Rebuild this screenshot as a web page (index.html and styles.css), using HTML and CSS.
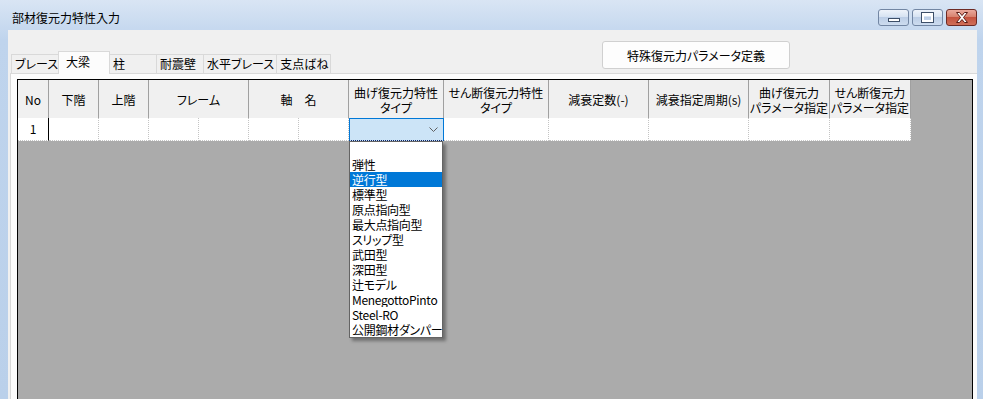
FILE: index.html
```html
<!DOCTYPE html>
<html>
<head>
  <meta charset="UTF-8">
  <title>部材復元力特性入力</title>
  <link rel="stylesheet" href="styles.css">
</head>
<body>
  <div class="window">
    <!-- タイトルバー -->
    <div class="titlebar">
      <span class="title">部材復元力特性入力</span>
      <div class="wbtns">
        <span class="wbtn min"><i></i></span>
        <span class="wbtn max"><i></i></span>
        <span class="wbtn close">
          <svg width="14" height="11" viewBox="0 0 14 11">
            <path d="M1.5 0.5h3l2.5 3 2.5-3h3l-4 5 4 5h-3l-2.5-3-2.5 3h-3l4-5z" fill="#fff" stroke="#5b1c16" stroke-width="1"/>
          </svg>
        </span>
      </div>
    </div>

    <div class="client">
      <!-- タブと特殊パラメータボタン -->
      <div class="toparea">
        <div class="tabs">
          <div class="tab">ブレース</div>
          <div class="tab active">大梁</div>
          <div class="tab">柱</div>
          <div class="tab">耐震壁</div>
          <div class="tab">水平ブレース</div>
          <div class="tab">支点ばね</div>
        </div>
        <button class="special-btn">特殊復元力パラメータ定義</button>
      </div>

      <div class="panel">
        <div class="grid">
          <div class="grid-head">
            <div class="hc c-no">No</div>
            <div class="hc c-50">下階</div>
            <div class="hc c-50">上階</div>
            <div class="hc c-100">フレーム</div>
            <div class="hc c-100">軸　名</div>
            <div class="hc c-bend">曲げ復元力特性<br>タイプ</div>
            <div class="hc c-shear">せん断復元力特性<br>タイプ</div>
            <div class="hc c-100">減衰定数(-)</div>
            <div class="hc c-100">減衰指定周期(s)</div>
            <div class="hc c-param">曲げ復元力<br>パラメータ指定</div>
            <div class="hc c-param">せん断復元力<br>パラメータ指定</div>
          </div>
          <div class="grid-row">
            <div class="dc c-no">1</div>
            <div class="dc c-50"></div>
            <div class="dc c-50"></div>
            <div class="dc c-50"></div>
            <div class="dc c-50"></div>
            <div class="dc c-50"></div>
            <div class="dc c-50"></div>
            <div class="dc c-bend combo">
              <svg class="chevron" width="9" height="5" viewBox="0 0 9 5">
                <polyline points="0.5,0.5 4.5,4.5 8.5,0.5" fill="none" stroke="#606060" stroke-width="1"/>
              </svg>
              <ul class="dropdown">
                <li>&nbsp;</li>
                <li>弾性</li>
                <li class="selected">逆行型</li>
                <li>標準型</li>
                <li>原点指向型</li>
                <li>最大点指向型</li>
                <li>スリップ型</li>
                <li>武田型</li>
                <li>深田型</li>
                <li>辻モデル</li>
                <li>MenegottoPinto</li>
                <li>Steel-RO</li>
                <li>公開鋼材ダンパー</li>
              </ul>
            </div>
            <div class="dc c-shear"></div>
            <div class="dc c-100"></div>
            <div class="dc c-100"></div>
            <div class="dc c-param"></div>
            <div class="dc c-param"></div>
          </div>
        </div>
      </div>
    </div>
  </div>
</body>
</html>
```

FILE: styles.css
```css
/* fenêtre globale */
body {
  margin: 0;
  font-family: "Noto Sans CJK JP", "Noto Sans", sans-serif;
  font-size: 12px;
  color: #000;
  font-feature-settings: "palt";
}
.window {
  width: 983px;
  height: 399px;
  overflow: hidden;
  display: flex;
  flex-direction: column;
  background: linear-gradient(#d9e5f4, #bfd4ed 40px, #bad0ea);
}
/* barre de titre */
.titlebar {
  height: 30px;
  display: flex;
  align-items: flex-start;
  flex-shrink: 0;
}
.title {
  padding: 10px 0 0 12px;
  line-height: 16px;
}
.wbtns {
  display: flex;
  margin: 9px 6px 0 auto;
}
.wbtn {
  width: 31px;
  height: 17px;
  box-sizing: border-box;
  border: 1px solid #7286a3;
  border-radius: 3px;
  margin-left: 3px;
  display: flex;
  align-items: center;
  justify-content: center;
  background: linear-gradient(#eef3fa, #d7e3f2 45%, #bccee6 50%, #cddcef);
}
.wbtn.min i {
  width: 10px;
  height: 2px;
  margin-top: 5px;
  background: #fff;
  border: 1px solid #3d4f68;
}
.wbtn.max i {
  width: 7px;
  height: 4px;
  border: 2px solid #fff;
  border-top-width: 3px;
  outline: 1px solid #3d4f68;
}
.wbtn.close {
  border-color: #6d2a24;
  background: linear-gradient(#eaa99c, #d7826f 45%, #c4533f 50%, #d06f58);
}
/* zone client */
.client {
  flex: 1;
  margin: 0 6px 0 8px;
  background-color: #f0f0f0;
  display: flex;
  flex-direction: column;
}
.toparea {
  height: 43px;
  display: flex;
  flex-shrink: 0;
}
.tabs {
  display: flex;
  align-items: flex-end;
  margin-left: 2px;
  padding-left: 1px;
  position: relative;
  z-index: 2;
}
.tab {
  min-width: 48px;
  height: 19px;
  box-sizing: border-box;
  padding: 0 2px 0 3px;
  line-height: 18px;
  border: 1px solid #d9d9d9;
  border-bottom: none;
  margin-right: -1px;
  background-color: #f0f0f0;
  white-space: nowrap;
}
.tab.active {
  height: 23px;
  margin: 0 -1px -1px -2px;
  padding: 0 6px 0 7px;
  min-width: 52px;
  line-height: 19px;
  background-color: #fcfcfc;
  position: relative;
}
.special-btn {
  margin: 11px 187px 0 auto;
  width: 188px;
  height: 28px;
  font: inherit;
  font-feature-settings: "palt";
  background-color: #fdfdfd;
  border: 1px solid #d0d0d0;
  border-radius: 3px;
  color: #000;
}
/* panneau de l'onglet */
.panel {
  flex: 1;
  margin-left: 2px;
  border-left: 1px solid #d9d9d9;
  border-top: 1px solid #d9d9d9;
  background-color: #fcfcfc;
  padding: 5px 0 0 6px;
  display: flex;
  flex-direction: column;
}
.grid {
  width: 956px;
  flex: 1;
  box-sizing: border-box;
  border: 1px solid #000;
  border-bottom: none;
  background-color: #ababab;
}
.grid-head,
.grid-row {
  display: flex;
}
.hc {
  height: 38px;
  box-sizing: border-box;
  background-color: #f0f0f0;
  border-right: 1px solid #a0a0a0;
  display: flex;
  align-items: center;
  justify-content: center;
  text-align: center;
  line-height: 15px;
  padding-top: 1px;
}
.dc {
  height: 23px;
  box-sizing: border-box;
  background-color: #fff;
  border-right: 1px dotted #c4c4c4;
  border-bottom: 1px dotted #c4c4c4;
  line-height: 22px;
  text-align: center;
}
.c-no { width: 31px; }
.c-50 { width: 50px; }
.c-100 { width: 100px; }
.c-bend { width: 95px; }
.c-shear { width: 105px; }
.c-param { width: 81px; }
.dc.c-no {
  border-right: 1px solid #000;
}
/* combo en édition */
.combo {
  position: relative;
  background-color: #cce4f7;
  border: 1px solid #0078d7;
  border-bottom: 1px dotted #0a246a;
}
.chevron {
  position: absolute;
  right: 5px;
  top: 8px;
}
.dropdown {
  position: absolute;
  top: 22px;
  left: -1px;
  width: 94px;
  box-sizing: border-box;
  margin: 0;
  padding: 0;
  list-style: none;
  background-color: #fff;
  border: 1px solid #646464;
  box-shadow: 3px 3px 3px rgba(0, 0, 0, 0.35);
  text-align: left;
  letter-spacing: -0.3px;
  z-index: 5;
}
.dropdown li {
  height: 15px;
  line-height: 15px;
  padding-left: 2px;
  white-space: nowrap;
  overflow: hidden;
}
.dropdown li.selected {
  background-color: #0078d7;
  color: #fff;
}
```
